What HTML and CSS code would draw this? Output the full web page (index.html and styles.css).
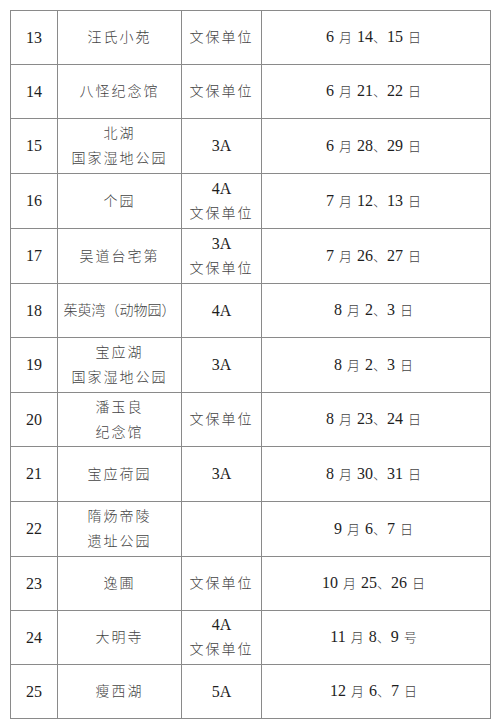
FILE: index.html
```html
<!DOCTYPE html>
<html lang="zh">
<head>
<meta charset="utf-8">
<link rel="stylesheet" href="styles.css">
</head>
<body>
<table class="sched">
  <colgroup>
    <col class="c-no"><col class="c-name"><col class="c-lvl"><col class="c-date">
  </colgroup>
  <tbody>
    <tr class="h54"><td>13</td><td><span class="zh">汪氏小苑</span></td><td><span class="zh">文保单位</span></td><td>6<span class="u">月</span>14<span class="p">、</span>15<span class="u">日</span></td></tr>
    <tr class="h54"><td>14</td><td><span class="zh">八怪纪念馆</span></td><td><span class="zh">文保单位</span></td><td>6<span class="u">月</span>21<span class="p">、</span>22<span class="u">日</span></td></tr>
    <tr class="h55"><td>15</td><td><span class="zh">北湖</span><br><span class="zh">国家湿地公园</span></td><td>3A</td><td>6<span class="u">月</span>28<span class="p">、</span>29<span class="u">日</span></td></tr>
    <tr class="h55"><td>16</td><td><span class="zh">个园</span></td><td>4A<br><span class="zh">文保单位</span></td><td>7<span class="u">月</span>12<span class="p">、</span>13<span class="u">日</span></td></tr>
    <tr class="h55"><td>17</td><td><span class="zh">吴道台宅第</span></td><td>3A<br><span class="zh">文保单位</span></td><td>7<span class="u">月</span>26<span class="p">、</span>27<span class="u">日</span></td></tr>
    <tr class="h54"><td>18</td><td class="tight"><span class="zh">茱萸湾（动物园）</span></td><td>4A</td><td>8<span class="u">月</span>2<span class="p">、</span>3<span class="u">日</span></td></tr>
    <tr class="h55"><td>19</td><td><span class="zh">宝应湖</span><br><span class="zh">国家湿地公园</span></td><td>3A</td><td>8<span class="u">月</span>2<span class="p">、</span>3<span class="u">日</span></td></tr>
    <tr class="h54"><td>20</td><td><span class="zh">潘玉良</span><br><span class="zh">纪念馆</span></td><td><span class="zh">文保单位</span></td><td>8<span class="u">月</span>23<span class="p">、</span>24<span class="u">日</span></td></tr>
    <tr class="h55"><td>21</td><td><span class="zh">宝应荷园</span></td><td>3A</td><td>8<span class="u">月</span>30<span class="p">、</span>31<span class="u">日</span></td></tr>
    <tr class="h55"><td>22</td><td><span class="zh">隋炀帝陵</span><br><span class="zh">遗址公园</span></td><td></td><td>9<span class="u">月</span>6<span class="p">、</span>7<span class="u">日</span></td></tr>
    <tr class="h54"><td>23</td><td><span class="zh">逸圃</span></td><td><span class="zh">文保单位</span></td><td>10<span class="u">月</span>25<span class="p">、</span>26<span class="u">日</span></td></tr>
    <tr class="h54"><td>24</td><td><span class="zh">大明寺</span></td><td>4A<br><span class="zh">文保单位</span></td><td>11<span class="u">月</span>8<span class="p">、</span>9<span class="u">号</span></td></tr>
    <tr class="h54"><td>25</td><td><span class="zh">瘦西湖</span></td><td>5A</td><td>12<span class="u">月</span>6<span class="p">、</span>7<span class="u">日</span></td></tr>
  </tbody>
</table>
</body>
</html>
```

FILE: styles.css
```css
html, body {
  margin: 0;
  padding: 0;
  background: #ffffff;
}
body {
  padding: 10px 0 0 10px;
  font-family: "Liberation Serif", "Noto Sans CJK SC", serif;
  font-size: 16px;
  color: #1e1e1e;
}
.sched {
  border-collapse: collapse;
  table-layout: fixed;
  width: 481px;
}
.c-no { width: 47px; }
.c-name { width: 124px; }
.c-lvl { width: 80px; }
.c-date { width: 229px; }
.sched td {
  border: 1px solid #8a8a8a;
  text-align: center;
  vertical-align: middle;
  padding: 0;
  line-height: 24px;
  white-space: nowrap;
}
.h54 { height: 54px; }
.h55 { height: 55px; }
.zh {
  font-size: 14px;
  font-weight: 300;
  letter-spacing: 2px;
  color: #444444;
}
.tight .zh {
  letter-spacing: 0;
}
.u {
  display: inline-block;
  font-size: 13px;
  font-weight: 300;
  color: #444444;
  margin: 0 5px 0 5px;
}
.p {
  font-size: 13px;
  font-weight: 300;
  color: #444444;
  margin-right: 1px;
}
```
